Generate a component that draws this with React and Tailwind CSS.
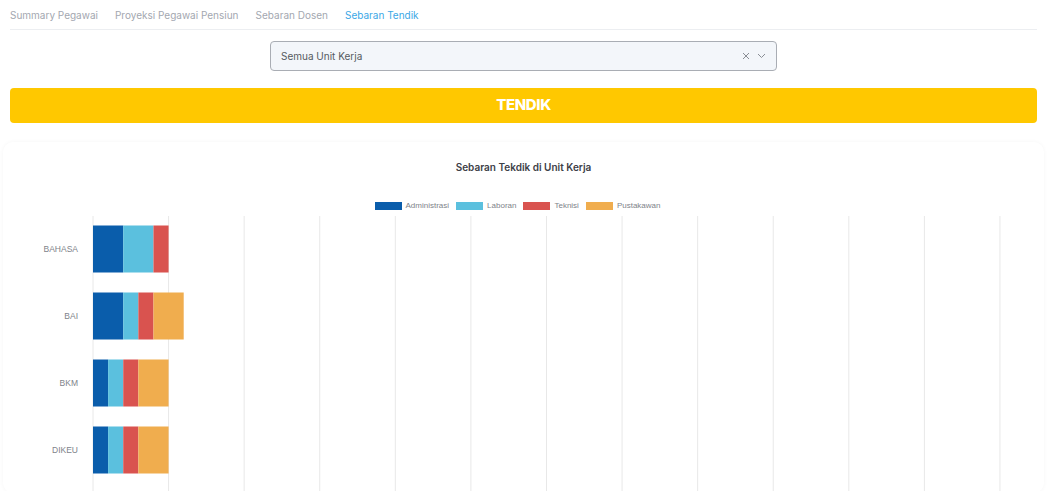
import React from "react";

const tabs = ["Summary Pegawai", "Proyeksi Pegawai Pensiun", "Sebaran Dosen", "Sebaran Tendik"];

const series = [
  { label: "Administrasi", color: "#0a5dab" },
  { label: "Laboran", color: "#5bc0de" },
  { label: "Teknisi", color: "#d9534f" },
  { label: "Pustakawan", color: "#f0ad4e" },
];

const rows = [
  { name: "BAHASA", values: [2, 2, 1, 0] },
  { name: "BAI", values: [2, 1, 1, 2] },
  { name: "BKM", values: [1, 1, 1, 2] },
  { name: "DIKEU", values: [1, 1, 1, 2] },
];

// chart geometry (svg coords, card-relative)
const X0 = 90;
const STEP = 75.58;
const UNIT = STEP / 5;
const TOP = 73;
const BAND = 67;

function Chart() {
  return (
    <svg width="1040" height="350" className="block" style={{ fontFamily: "'Liberation Sans', Arial, sans-serif" }}>
      {Array.from({ length: 13 }).map((_, i) => (
        <line
          key={i}
          x1={X0 + i * STEP}
          x2={X0 + i * STEP}
          y1={TOP}
          y2={350}
          stroke="#e8e8e8"
          strokeWidth="1"
        />
      ))}
      {rows.map((row, r) => {
        let x = X0;
        const y = TOP + r * BAND + 9.5;
        return (
          <g key={row.name}>
            <text x={75} y={y + 24} textAnchor="end" fontSize="8.5" fill="#80838a" dominantBaseline="middle">
              {row.name}
            </text>
            {row.values.map((v, i) => {
              if (!v) return null;
              const w = v * UNIT;
              const el = (
                <rect key={i} x={x} y={y} width={w} height={47} fill={series[i].color} />
              );
              x += w;
              return el;
            })}
          </g>
        );
      })}
    </svg>
  );
}

export default function App() {
  return (
    <div className="min-h-screen bg-white" style={{ fontFamily: "Inter, 'Noto Sans', sans-serif" }}>
      <div className="px-[10px]">
        <div className="flex gap-[17px] border-b border-[#eceef1] pt-[8px] pb-[7px] text-[10px] leading-[14px]">
          {tabs.map((t, i) => (
            <span key={t} className={i === 3 ? "text-[#3ba7e6]" : "text-[#a3a7b0]"}>
              {t}
            </span>
          ))}
        </div>

        <div className="mt-[11px] flex justify-center">
          <div className="flex h-[30px] w-[507px] items-center justify-between rounded-[4px] border border-[#a9adb4] bg-[#f3f6fa] pl-[10px] pr-[10px]">
            <span className="text-[10px] text-[#555a60]">Semua Unit Kerja</span>
            <div className="flex items-center gap-[7px] text-[#8a8e95]">
              <svg width="8" height="8" viewBox="0 0 8 8">
                <path d="M1 1L7 7M7 1L1 7" stroke="currentColor" strokeWidth="1" />
              </svg>
              <svg width="9" height="6" viewBox="0 0 9 6">
                <path d="M1 1L4.5 4.5L8 1" stroke="currentColor" strokeWidth="1" fill="none" />
              </svg>
            </div>
          </div>
        </div>

        <div className="mt-[17px] flex h-[35px] items-center justify-center rounded-[4px] bg-[#ffc800]">
          <span className="text-[15px] font-extrabold tracking-tight text-white">TENDIK</span>
        </div>
      </div>

      <div className="mx-[3px] mt-[19px] rounded-[10px] bg-white shadow-[0_0_4px_rgba(0,0,0,0.04)]">
        <div className="pt-[18px] text-center text-[10px] font-semibold text-[#3d4047]">
          Sebaran Tekdik di Unit Kerja
        </div>
        <div
          className="mt-[25px] flex justify-center gap-[7px] pr-[12px] text-[8px] text-[#80838a]"
          style={{ fontFamily: "'Liberation Sans', Arial, sans-serif" }}
        >
          {series.map((s) => (
            <div key={s.label} className="flex items-center gap-[4px]">
              <span className="inline-block h-[8px] w-[27px]" style={{ backgroundColor: s.color }} />
              <span>{s.label}</span>
            </div>
          ))}
        </div>
        <div className="-mt-[69px]">
          <Chart />
        </div>
      </div>
    </div>
  );
}
